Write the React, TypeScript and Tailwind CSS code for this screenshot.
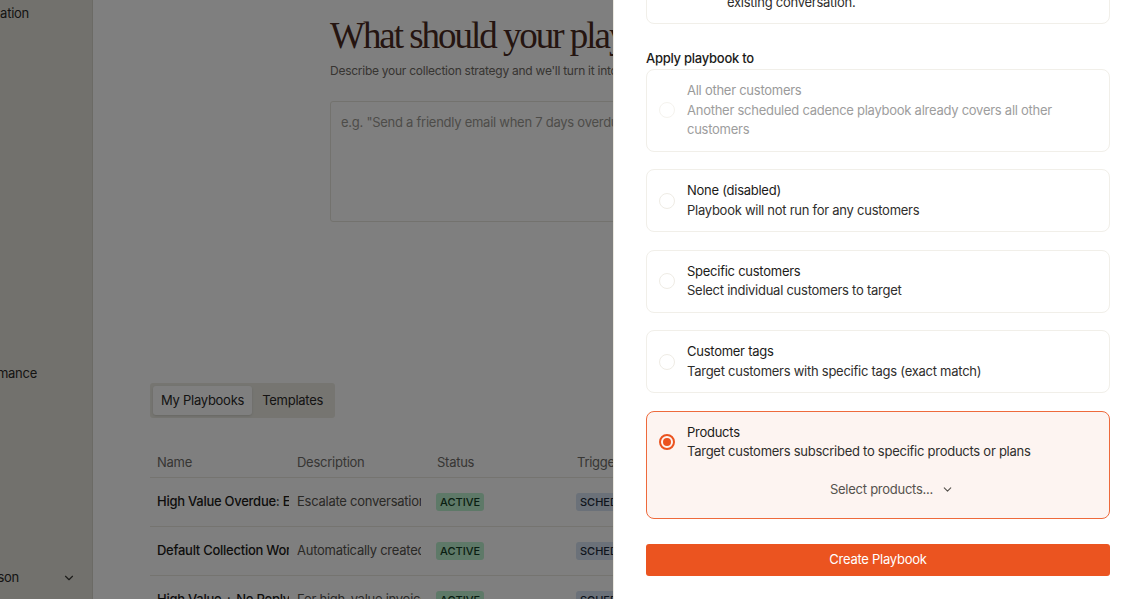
import React from "react";

function Radio({ checked, disabled }: { checked?: boolean; disabled?: boolean }) {
  if (checked) {
    return (
      <span className="flex h-4 w-4 shrink-0 items-center justify-center rounded-full border-2 border-[#eb5320]">
        <span className="h-2 w-2 rounded-full bg-[#eb5320]" />
      </span>
    );
  }
  return (
    <span
      className={
        "h-4 w-4 shrink-0 rounded-full border " +
        (disabled ? "border-[#f5f3ee]" : "border-[#efece5]")
      }
    />
  );
}

function Option({
  title,
  desc,
  disabled,
}: {
  title: string;
  desc: React.ReactNode;
  disabled?: boolean;
}) {
  return (
    <div className="rounded-lg border border-[#f1efe9] bg-white px-3 py-[11px]">
      <div className="flex items-center gap-3">
        <Radio disabled={disabled} />
        <div className={"leading-[19.5px] " + (disabled ? "text-[#9a9a9a]" : "text-[#1c1b19]")}>
          <div>{title}</div>
          <div className={disabled ? "text-[#9d9d9d]" : "text-[#2f2e2c]"}>{desc}</div>
        </div>
      </div>
    </div>
  );
}

const rows = [
  { name: "High Value Overdue: Escalate", desc: "Escalate conversation to manager" },
  { name: "Default Collection Workflow", desc: "Automatically created default playbook" },
  { name: "High Value + No Reply", desc: "For high-value invoices with no reply" },
];

export default function App() {
  return (
    <div className="relative h-[599px] w-[1138px] overflow-hidden bg-white font-['Inter',_'Noto_Sans',_sans-serif] text-[13px] tracking-[-0.02em]">
      {/* underlying app */}
      <div className="flex h-full">
        <aside className="flex h-full w-[93px] shrink-0 flex-col border-r border-[#d6d4cb] bg-[#e5e3da] text-[#2a2927]">
          <div className="mt-[4px] flex h-5 items-center">
            <div className="flex w-[29px] justify-end overflow-hidden whitespace-nowrap">Automation</div>
          </div>
          <div className="mt-[340px] flex h-5 items-center">
            <div className="flex w-[37px] justify-end overflow-hidden whitespace-nowrap">Performance</div>
          </div>
          <div className="mt-auto mb-[11px] flex h-5 items-center">
            <div className="flex w-[19px] justify-end overflow-hidden whitespace-nowrap">Emily Carson</div>
            <svg className="ml-[43px]" width="14" height="14" viewBox="0 0 24 24" fill="none" stroke="#3a3936" strokeWidth="2" strokeLinecap="round" strokeLinejoin="round">
              <path d="m6 9 6 6 6-6" />
            </svg>
          </div>
        </aside>
        <main className="flex-1 px-[57px]">
          <div className="ml-[180px] w-[576px] pt-[14px]">
            <h1 className="font-['Liberation_Serif',_serif] text-[37px] leading-[44px] tracking-[-0.055em] text-[#4a2b23]">
              What should your playbook do?
            </h1>
            <p className="mt-[5px] text-[12px] leading-4 text-[#6f6a64]">
              Describe your collection strategy and we'll turn it into a playbook.
            </p>
            <div className="mt-[22px] h-[121px] rounded-[3px] border border-[#e6e4dc] px-[10px] py-[10px] leading-5 text-[#9b9993]">
              e.g. "Send a friendly email when 7 days overdue, then escalate after 14 days"
            </div>
          </div>
          <div className="mt-[161px] inline-flex h-[35px] items-center rounded-[3px] bg-[#ecebe3] px-[3px] text-[#2a2927]">
            <div className="flex h-[29px] items-center whitespace-nowrap rounded-[3px] bg-white px-2 shadow-sm">My Playbooks</div>
            <div className="flex h-[29px] items-center whitespace-nowrap pl-[10px] pr-[9px]">Templates</div>
          </div>
          <div className="mt-[30px]">
            <div className="flex h-[30px] items-center border-b border-[#ebe9e1] text-[#6e6c68]">
              <div className="w-[140px] px-[7px]">Name</div>
              <div className="w-[140px] px-[7px]">Description</div>
              <div className="w-[140px] px-[7px]">Status</div>
              <div className="w-[140px] px-[7px]">Trigger</div>
            </div>
            {rows.map((r) => (
              <div key={r.name} className="flex h-[49px] items-center border-b border-[#ebe9e1]">
                <div className="w-[140px] pl-[7px]">
                  <div className="w-[132px] overflow-hidden whitespace-nowrap font-medium text-[#1c1b19]">{r.name}</div>
                </div>
                <div className="w-[140px] pl-[7px]">
                  <div className="w-[124px] overflow-hidden whitespace-nowrap text-[#55524d]">{r.desc}</div>
                </div>
                <div className="w-[140px] pl-[6px] pr-[7px]">
                  <span className="rounded-[3px] bg-[#bdf2d0] px-[4px] py-[2px] text-[11px] font-medium tracking-normal text-[#123d24]">ACTIVE</span>
                </div>
                <div className="w-[140px] pl-[6px] pr-[7px]">
                  <span className="rounded-[3px] bg-[#d6e3f2] px-[4px] py-[2px] text-[11px] font-medium tracking-normal text-[#1d2a3a]">SCHEDULED</span>
                </div>
              </div>
            ))}
          </div>
        </main>
      </div>

      {/* overlay */}
      <div className="absolute inset-0 bg-black/50" />

      {/* sheet */}
      <div className="absolute top-0 right-0 bottom-0 w-[525px] overflow-hidden border-l border-[#ebe9e1] bg-white pl-[32px] pr-[28px]">
        <div className="-mt-[39px] rounded-lg border border-[#f1efe9] py-[11px] pl-[80px] pr-3 leading-[19.5px] text-[#2f2e2c]">
          <div>Start a new thread instead of replying in the</div>
          <div>existing conversation.</div>
        </div>
        <div className="mt-[24px] h-5 font-medium leading-5 text-[#1c1b19]">Apply playbook to</div>
        <div className="mt-[1px] flex flex-col gap-[17.5px]">
          <Option
            disabled
            title="All other customers"
            desc="Another scheduled cadence playbook already covers all other customers"
          />
          <Option title="None (disabled)" desc="Playbook will not run for any customers" />
          <Option title="Specific customers" desc="Select individual customers to target" />
          <Option title="Customer tags" desc="Target customers with specific tags (exact match)" />
          <div className="rounded-lg border border-[#ee6a3c] bg-[#fdf4f1] px-3 py-[11px]">
            <div className="flex items-center gap-3">
              <Radio checked />
              <div className="leading-[19.5px] text-[#1c1b19]">
                <div>Products</div>
                <div className="text-[#2f2e2c]">Target customers subscribed to specific products or plans</div>
              </div>
            </div>
            <div className="mt-[11px] ml-[28px] flex h-[34px] items-center justify-center gap-2 text-[#55524d]">
              <span>Select products...</span>
              <svg width="13" height="13" viewBox="0 0 24 24" fill="none" stroke="#55524d" strokeWidth="2" strokeLinecap="round" strokeLinejoin="round">
                <path d="m6 9 6 6 6-6" />
              </svg>
            </div>
          </div>
        </div>
        <button className="mt-[25px] flex h-8 w-full items-center justify-center rounded-[3px] bg-[#eb5420] text-white">
          Create Playbook
        </button>
      </div>
    </div>
  );
}
